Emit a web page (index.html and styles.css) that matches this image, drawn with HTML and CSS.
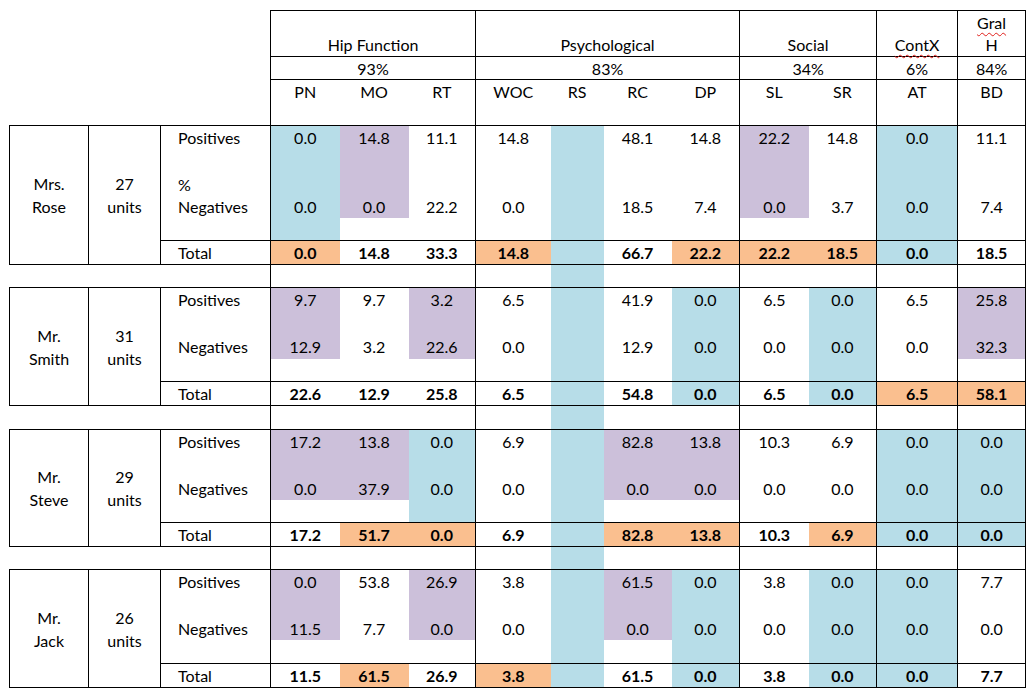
FILE: index.html
```html
<!DOCTYPE html>
<html lang="en">
<head>
<meta charset="utf-8">
<title>Hip patients summary</title>
<link rel="stylesheet" href="styles.css">
</head>
<body>
<div class="page">
<table class="grid">
<colgroup class="lead"><col class="c-name"><col class="c-units"><col class="c-label"></colgroup>
<colgroup class="grp"><col class="c-pn"><col class="c-mo"><col class="c-rt"></colgroup>
<colgroup class="grp"><col class="c-woc"><col class="c-rs"><col class="c-rc"><col class="c-dp"></colgroup>
<colgroup class="grp"><col class="c-sl"><col class="c-sr"></colgroup>
<colgroup class="grp"><col class="c-at"></colgroup>
<colgroup class="grp"><col class="c-bd"></colgroup>
<thead>
<tr class="h-group"><td colspan="3" class="void"></td><th colspan="3">Hip Function</th><th colspan="4">Psychological</th><th colspan="2">Social</th><th><span class="spell">ContX</span></th><th><span class="spell">Gral</span><br>H</th></tr>
<tr class="h-pct"><td colspan="3" class="void"></td><th colspan="3">93%</th><th colspan="4">83%</th><th colspan="2">34%</th><th>6%</th><th>84%</th></tr>
<tr class="h-code"><td colspan="3" class="void"></td><th>PN</th><th>MO</th><th>RT</th><th>WOC</th><th>RS</th><th>RC</th><th>DP</th><th>SL</th><th>SR</th><th>AT</th><th>BD</th></tr>
</thead>

<tbody class="block blk1">
<tr class="r-pos"><td rowspan="4" class="name">Mrs.<br>Rose</td><td rowspan="4" class="units">27<br>units</td><td class="label">Positives</td><td class="b">0.0</td><td class="p">14.8</td><td>11.1</td><td>14.8</td><td class="b"></td><td>48.1</td><td>14.8</td><td class="p">22.2</td><td>14.8</td><td class="b">0.0</td><td>11.1</td></tr>
<tr class="r-neg r-tall"><td class="label">%<br>Negatives</td><td class="b">0.0</td><td class="p">0.0</td><td>22.2</td><td>0.0</td><td class="b"></td><td>18.5</td><td>7.4</td><td class="p">0.0</td><td>3.7</td><td class="b">0.0</td><td>7.4</td></tr>
<tr class="r-gap"><td class="label"></td><td class="b"></td><td></td><td></td><td></td><td class="b"></td><td></td><td></td><td></td><td></td><td class="b"></td><td></td></tr>
<tr class="r-total"><td class="label">Total</td><td class="o">0.0</td><td>14.8</td><td>33.3</td><td class="o">14.8</td><td class="b"></td><td>66.7</td><td class="o">22.2</td><td class="o">22.2</td><td class="o">18.5</td><td class="b">0.0</td><td>18.5</td></tr>
</tbody>
<tbody class="spacer"><tr class="r-sp1"><td colspan="3"></td><td></td><td></td><td></td><td></td><td class="b"></td><td></td><td></td><td></td><td></td><td></td><td></td></tr></tbody>

<tbody class="block blk2">
<tr class="r-pos"><td rowspan="4" class="name">Mr.<br>Smith</td><td rowspan="4" class="units">31<br>units</td><td class="label">Positives</td><td class="p">9.7</td><td>9.7</td><td class="p">3.2</td><td>6.5</td><td class="b"></td><td>41.9</td><td class="b">0.0</td><td>6.5</td><td class="b">0.0</td><td>6.5</td><td class="p">25.8</td></tr>
<tr class="r-neg"><td class="label">Negatives</td><td class="p">12.9</td><td>3.2</td><td class="p">22.6</td><td>0.0</td><td class="b"></td><td>12.9</td><td class="b">0.0</td><td>0.0</td><td class="b">0.0</td><td>0.0</td><td class="p">32.3</td></tr>
<tr class="r-gap"><td class="label"></td><td></td><td></td><td></td><td></td><td class="b"></td><td></td><td class="b"></td><td></td><td class="b"></td><td></td><td></td></tr>
<tr class="r-total"><td class="label">Total</td><td>22.6</td><td>12.9</td><td>25.8</td><td>6.5</td><td class="b"></td><td>54.8</td><td class="b">0.0</td><td>6.5</td><td class="b">0.0</td><td class="o">6.5</td><td class="o">58.1</td></tr>
</tbody>
<tbody class="spacer"><tr class="r-sp2"><td colspan="3"></td><td></td><td></td><td></td><td></td><td class="b"></td><td></td><td></td><td></td><td></td><td></td><td></td></tr></tbody>

<tbody class="block blk3">
<tr class="r-pos"><td rowspan="4" class="name">Mr.<br>Steve</td><td rowspan="4" class="units">29<br>units</td><td class="label">Positives</td><td class="p">17.2</td><td class="p">13.8</td><td class="b">0.0</td><td>6.9</td><td class="b"></td><td class="p">82.8</td><td class="p">13.8</td><td>10.3</td><td>6.9</td><td class="b">0.0</td><td class="b">0.0</td></tr>
<tr class="r-neg"><td class="label">Negatives</td><td class="p">0.0</td><td class="p">37.9</td><td class="b">0.0</td><td>0.0</td><td class="b"></td><td class="p">0.0</td><td class="p">0.0</td><td>0.0</td><td>0.0</td><td class="b">0.0</td><td class="b">0.0</td></tr>
<tr class="r-gap"><td class="label"></td><td></td><td></td><td class="b"></td><td></td><td class="b"></td><td></td><td></td><td></td><td></td><td class="b"></td><td class="b"></td></tr>
<tr class="r-total"><td class="label">Total</td><td>17.2</td><td class="o">51.7</td><td class="o">0.0</td><td>6.9</td><td class="b"></td><td class="o">82.8</td><td class="o">13.8</td><td>10.3</td><td class="o">6.9</td><td class="b">0.0</td><td class="b">0.0</td></tr>
</tbody>
<tbody class="spacer"><tr class="r-sp3"><td colspan="3"></td><td></td><td></td><td></td><td></td><td class="b"></td><td></td><td></td><td></td><td></td><td></td><td></td></tr></tbody>

<tbody class="block blk4">
<tr class="r-pos"><td rowspan="4" class="name">Mr.<br>Jack</td><td rowspan="4" class="units">26<br>units</td><td class="label">Positives</td><td class="p">0.0</td><td>53.8</td><td class="p">26.9</td><td>3.8</td><td class="b"></td><td class="p">61.5</td><td class="b">0.0</td><td>3.8</td><td class="b">0.0</td><td class="b">0.0</td><td>7.7</td></tr>
<tr class="r-neg"><td class="label">Negatives</td><td class="p">11.5</td><td>7.7</td><td class="p">0.0</td><td>0.0</td><td class="b"></td><td class="p">0.0</td><td class="b">0.0</td><td>0.0</td><td class="b">0.0</td><td class="b">0.0</td><td>0.0</td></tr>
<tr class="r-gap"><td class="label"></td><td></td><td></td><td></td><td></td><td class="b"></td><td></td><td class="b"></td><td></td><td class="b"></td><td class="b"></td><td></td></tr>
<tr class="r-total"><td class="label">Total</td><td>11.5</td><td class="o">61.5</td><td>26.9</td><td class="o">3.8</td><td class="b"></td><td>61.5</td><td class="b">0.0</td><td>3.8</td><td class="b">0.0</td><td class="b">0.0</td><td>7.7</td></tr>
</tbody>
</table>
</div>
</body>
</html>
```

FILE: styles.css
```css
html, body {
  margin: 0;
  background: #ffffff;
}

body {
  font-family: Lato, "Open Sans", sans-serif;
  font-size: 16px;
  color: #000000;
}

.page {
  padding: 10px 0 0 9px;
}

.grid {
  border-collapse: collapse;
  table-layout: fixed;
  width: 1017px;
}

.grid td,
.grid th {
  padding: 0;
  font-weight: 400;
  text-align: center;
  vertical-align: top;
  line-height: 23px;
}

.c-name { width: 79px; }
.c-units { width: 72px; }
.c-label { width: 110px; }
.c-pn { width: 69px; }
.c-mo { width: 69px; }
.c-rt { width: 67px; }
.c-woc { width: 75px; }
.c-rs { width: 53px; }
.c-rc { width: 68px; }
.c-dp { width: 68px; }
.c-sl { width: 69px; }
.c-sr { width: 68px; }
.c-at { width: 81px; }
.c-bd { width: 68px; }

.grp {
  border-left: 1px solid #000;
  border-right: 1px solid #000;
}

/* header */
.h-group { height: 46px; }
.grid .h-group th {
  border-top: 1px solid #000;
  border-bottom: 1px solid #000;
  vertical-align: bottom;
  line-height: 22px;
}
.h-pct { height: 23px; }
.grid .h-pct th {
  border-bottom: 1px solid #000;
  vertical-align: middle;
  line-height: 21px;
}
.h-code { height: 46px; }

.spell {
  text-decoration: underline wavy #e0201c;
  text-decoration-thickness: 1px;
  text-underline-offset: 3px;
}

/* person blocks */
.block {
  border: 1px solid #000;
}

.grid .name,
.grid .units {
  border-right: 1px solid #000;
  vertical-align: middle;
}

.grid .label {
  text-align: left;
  padding-left: 17px;
}

.r-pos { height: 47px; }
.r-neg { height: 23px; }
.r-gap { height: 23px; }
.r-total { height: 24px; }

.blk1 .r-pos { height: 46px; }
.blk1 .r-neg { height: 46px; }
.grid .blk1 .r-neg td {
  vertical-align: bottom;
  line-height: 22px;
}
.blk2 .r-neg { height: 24px; }
.blk4 .r-gap { height: 24px; }

.grid .r-total td {
  border-top: 1px solid #000;
  font-weight: 700;
  vertical-align: middle;
}
.grid .r-total td.label { font-weight: 400; }

.r-sp1 { height: 23px; }
.r-sp2 { height: 24px; }
.r-sp3 { height: 23px; }

/* fills */
.b { background: #b7dde8; }
.p { background: #ccc0da; }
.o { background: #fabf8f; }
```
